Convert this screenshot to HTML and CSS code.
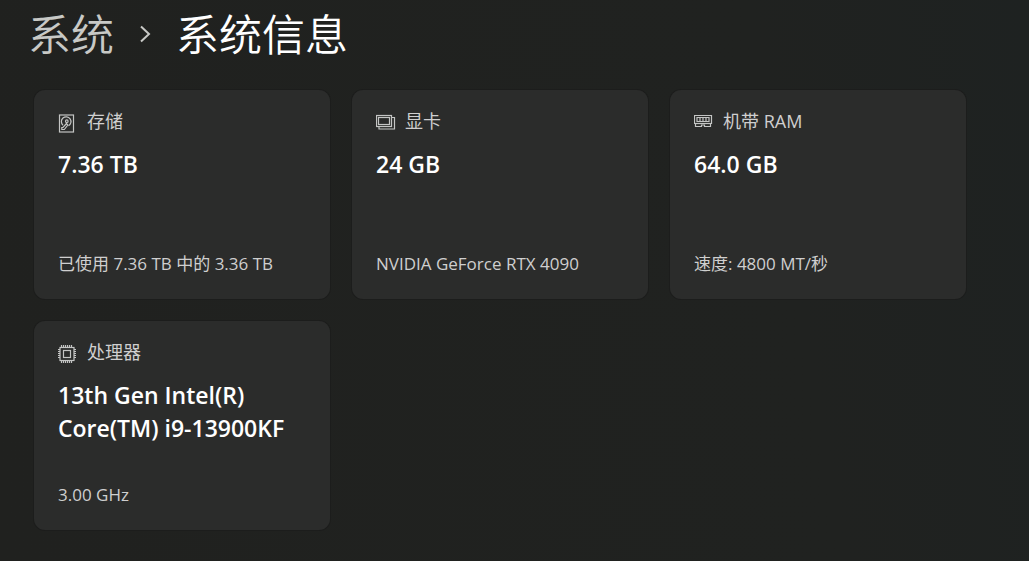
FILE: index.html
```html
<!DOCTYPE html>
<html lang="zh-CN">
<head>
    <meta charset="UTF-8">
    <meta name="viewport" content="width=device-width, initial-scale=1.0">
    <title>系统信息</title>
    <link rel="stylesheet" href="styles.css">
</head>
<body>
    <nav class="breadcrumb">
        <a href="#" class="crumb">系统</a>
        <svg class="chevron" viewBox="0 0 14 18" aria-hidden="true">
            <path d="M3 1.500l8 7.500-8 7.500"/>
        </svg>
        <h1>系统信息</h1>
    </nav>

    <main class="cards">
        <section class="card">
            <h2 class="card-label">
                <svg class="icon" viewBox="0 0 20 20" aria-hidden="true">
                    <rect x="1.5" y="2" width="14" height="17"/>
                    <path d="M5 12.2A4.800 4.800 0 1 1 10.500 12.800"/>
                    <circle cx="8.8" cy="8.2" r="1.3"/>
                    <path d="M8.500 10.500L5 14.500H3.800v2h2.500l3.500-4.500z"/>
                </svg>
                存储
            </h2>
            <p class="value">7.36 TB</p>
            <p class="detail">已使用 7.36 TB 中的 3.36 TB</p>
        </section>

        <section class="card">
            <h2 class="card-label">
                <svg class="icon" viewBox="0 0 20 20" aria-hidden="true">
                    <rect x="0.5" y="2.5" width="15" height="11"/>
                    <rect x="2.5" y="4.5" width="11" height="7"/>
                    <path d="M16 4.500h2.500v11.500H3v-2"/>
                </svg>
                显卡
            </h2>
            <p class="value">24 GB</p>
            <p class="detail">NVIDIA GeForce RTX 4090</p>
        </section>

        <section class="card">
            <h2 class="card-label">
                <svg class="icon" viewBox="0 0 20 20" aria-hidden="true">
                    <path d="M0.500 2.500h17v8h-1v3h-6v-1.500h-3v1.500h-6v-3h-1z"/>
                    <path d="M1.500 10.500h15"/>
                    <path d="M3 4.500h12v4H3zM6 4.500v4M9 4.500v4M12 4.500v4"/>
                </svg>
                机带 RAM
            </h2>
            <p class="value">64.0 GB</p>
            <p class="detail">速度: 4800 MT/秒</p>
        </section>

        <section class="card">
            <h2 class="card-label">
                <svg class="icon" viewBox="0 0 20 20" aria-hidden="true">
                    <rect x="2" y="3.500" width="14" height="13"/>
                    <rect x="5.500" y="6.500" width="7" height="7"/>
                    <path d="M3.500 3V1M5.500 3V1M7.500 3V1M9.500 3V1M11.500 3V1M13.500 3V1M3.500 19v-2M5.500 19v-2M7.500 19v-2M9.500 19v-2M11.500 19v-2M13.500 19v-2M2 5.500H0M2 7.500H0M2 9.500H0M2 11.500H0M2 13.500H0M18 5.500h-2M18 7.500h-2M18 9.500h-2M18 11.500h-2M18 13.500h-2"/>
                </svg>
                处理器
            </h2>
            <p class="value">13th Gen Intel(R) Core(TM) i9-13900KF</p>
            <p class="detail">3.00 GHz</p>
        </section>
    </main>
</body>
</html>
```
FILE: styles.css
```css
* {
    box-sizing: border-box;
}

body {
    margin: 0;
    padding: 4px 63px 30px 34px;
    min-height: 100vh;
    background: linear-gradient(80deg, #20211f, #202220 75%, #1e2221);
    color: #fff;
    font-family: "Open Sans", "Noto Sans CJK SC", sans-serif;
    font-size: 17px;
    line-height: 24px;
}

h1,
h2,
p {
    margin: 0;
    font-weight: 400;
}

.breadcrumb {
    display: flex;
    align-items: center;
    gap: 24px;
    margin-left: -6px;
    margin-bottom: 30px;
    font-family: "Noto Sans CJK SC", sans-serif;
    font-size: 43px;
    line-height: 56px;
    font-weight: 350;
}

.breadcrumb h1 {
    font-size: 43px;
    font-weight: 350;
}

.crumb {
    color: #c8c9c6;
    text-decoration: none;
}

.chevron {
    width: 14px;
    height: 18px;
    margin-top: 4px;
    fill: none;
    stroke: #c8c9c6;
    stroke-width: 2;
}

.cards {
    display: grid;
    grid-template-columns: repeat(3, 1fr);
    gap: 22px;
}

.card {
    display: flex;
    flex-direction: column;
    min-height: 209px;
    padding: 19px 24px 23px;
    background: #2b2c2b;
    border-radius: 11px;
    box-shadow: 0 0 0 1px #1c1d1c;
}

.card-label {
    display: flex;
    align-items: center;
    gap: 9px;
    font-size: 18px;
    color: #cfcfcf;
}

.icon {
    width: 20px;
    height: 20px;
    margin-top: 4px;
    fill: none;
    stroke: #c4c5c4;
    stroke-width: 1.2;
}

.value {
    margin-top: 15px;
    font-size: 23px;
    line-height: 33px;
    font-weight: 600;
}

.detail {
    margin-top: auto;
    color: #cfcfcf;
}
```
